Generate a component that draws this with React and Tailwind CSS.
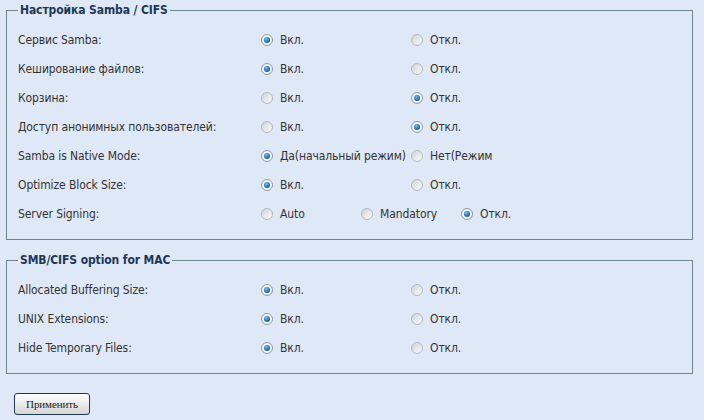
import React from 'react';

const Radio = ({ checked, label }) => (
  <label className="flex items-center gap-[7px] whitespace-nowrap">
    <span
      className={`relative flex h-3 w-3 shrink-0 items-center justify-center rounded-full border ${
        checked ? 'border-[#8c9aa6] bg-[#f4f6f8]' : 'border-[#b3bac1] bg-gradient-to-br from-[#d0d4d8] to-[#fbfbfb]'
      }`}
    >
      {checked && (
        <span className="h-[6px] w-[6px] rounded-full bg-[radial-gradient(circle_at_40%_35%,#7cc3f0_0%,#1f6fb5_55%,#0d3f78_100%)]" />
      )}
    </span>
    <span>{label}</span>
  </label>
);

const Row = ({ label, options, width = 'w-[150px]' }) => (
  <div className="flex h-[29px] items-center">
    <div className="w-[243px] shrink-0">{label}</div>
    {options.map((o, i) => (
      <div key={i} className={`${width} shrink-0`}>
        <Radio checked={o.checked} label={o.label} />
      </div>
    ))}
  </div>
);

const onOff = (on) => [
  { label: 'Вкл.', checked: on },
  { label: 'Откл.', checked: !on },
];

const Section = ({ title, children }) => (
  <fieldset className="border border-[#6e8693] pb-[11px] pl-[11px] pt-[7px]">
    <legend className="px-[2px] text-[12px] font-bold leading-[15px] text-[#1c3858]">{title}</legend>
    {children}
  </fieldset>
);

export default function App() {
  return (
    <div
      className="h-[420px] w-[704px] bg-[#dfe8f6] pl-[6px] pr-[11px] pt-[3px] text-[12px] tracking-[-0.1px] text-[#333]"
      style={{ fontFamily: '"DejaVu Sans Condensed", Tahoma, "Liberation Sans", sans-serif' }}
    >
      <Section title="Настройка Samba / CIFS">
        <Row label="Сервис Samba:" options={onOff(true)} />
        <Row label="Кеширование файлов:" options={onOff(true)} />
        <Row label="Корзина:" options={onOff(false)} />
        <Row label="Доступ анонимных пользователей:" options={onOff(false)} />
        <Row
          label="Samba is Native Mode:"
          options={[
            { label: 'Да(начальный режим)', checked: true },
            { label: 'Нет(Режим', checked: false },
          ]}
        />
        <Row label="Optimize Block Size:" options={onOff(true)} />
        <Row
          label="Server Signing:"
          width="w-[100px]"
          options={[
            { label: 'Auto', checked: false },
            { label: 'Mandatory', checked: false },
            { label: 'Откл.', checked: true },
          ]}
        />
      </Section>

      <div className="mt-[13px]">
        <Section title="SMB/CIFS option for MAC">
          <Row label="Allocated Buffering Size:" options={onOff(true)} />
          <Row label="UNIX Extensions:" options={onOff(true)} />
          <Row label="Hide Temporary Files:" options={onOff(true)} />
        </Section>
      </div>

      <button
        className="ml-[8px] mt-[19px] h-[22px] w-[76px] rounded-[3px] border border-[#1a3a63] bg-gradient-to-b from-white to-[#d6d6d6] text-[11px] text-[#222]"
        style={{ fontFamily: '"Liberation Serif", serif' }}
      >
        Применить
      </button>
    </div>
  );
}
